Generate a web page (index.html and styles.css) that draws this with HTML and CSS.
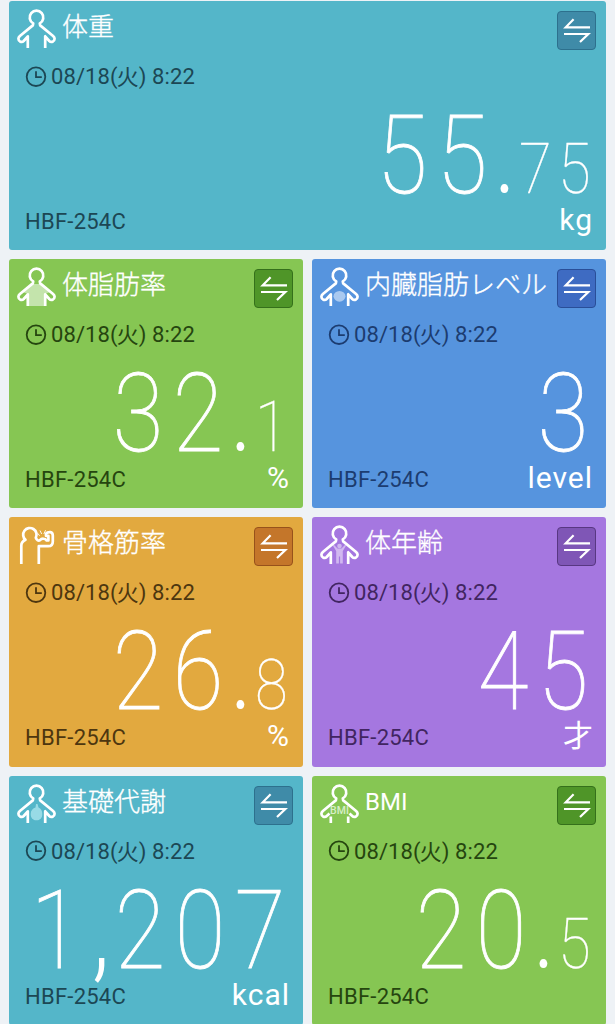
FILE: index.html
```html
<!DOCTYPE html>
<html lang="ja">
<head>
    <meta charset="UTF-8">
    <meta name="viewport" content="width=device-width, initial-scale=1.0">
    <title>HBF-254C</title>
    <link rel="stylesheet" href="styles.css">
</head>
<body>

    <!-- Shared icons -->
    <svg class="sprite">
        <symbol id="person" viewBox="0 0 40 40">
            <path d="M10.8 39V27.3L6.7 32C4.8 34 1.4 32.6 1.4 29.8C1.4 28.7 2 27.8 2.9 27L15.8 16.4L16.2 14.4A6.8 6.8 0 1 1 22.8 14.4L23.2 16.4L36.1 27C37 27.8 37.6 28.7 37.6 29.8C37.6 32.6 34.2 34 32.3 32L28.2 27.3V39"/>
        </symbol>
        <symbol id="muscle" viewBox="0 0 40 40">
            <path d="M4.3 39V20.5C4.3 17.5 6 16 8.5 14.8A6.7 6.7 0 1 1 18.8 12.8C19.8 15.4 21.5 16.3 23 15.2C24.6 13.2 28 13.2 29.6 15.4H31.4V10.8H29V8.6C30 7.4 32 7 33.4 7.1C35.2 7.4 35.8 8.8 35.8 10.6V16.5C35.8 20 34 21.2 31.3 21.2H21.8V39"/>
            <path class="fine" d="M23 5.5L24.7 9M28.6 5.2L26.8 9M20.6 8.2L22.6 10.8"/>
        </symbol>
        <symbol id="clock" viewBox="0 0 22 22">
            <path d="M11 1.4A9.3 9.3 0 1 1 11 20A9.3 9.3 0 1 1 11 1.4M11 5.2V11.2H16.8"/>
        </symbol>
        <symbol id="swap" viewBox="0 0 39 39">
            <path d="M16.6 8.3L8.7 16.3H33M7 23H31.3L23 31"/>
        </symbol>
    </svg>

    <main class="board">

        <!-- Weight -->
        <section class="card wide teal">
            <header class="head">
                <svg class="icon"><use href="#person"/></svg>
                <h2 class="title">体重</h2>
                <button class="swap"><svg><use href="#swap"/></svg></button>
            </header>
            <p class="time"><svg class="clock"><use href="#clock"/></svg>08/18(<span class="day">火</span>) 8:22</p>
            <div class="value"><b>5</b><b>5</b><i>.</i><small>7</small><small>5</small></div>
            <footer class="foot"><span class="model">HBF-254C</span><span class="unit">kg</span></footer>
        </section>

        <!-- Body fat -->
        <section class="card green">
            <header class="head">
                <svg class="icon" viewBox="0 0 40 40">
                    <path class="tint" d="M15.5 17H23.5L33 25L28.2 27V39H10.8V27L6 25Z"/>
                    <use href="#person"/>
                </svg>
                <h2 class="title">体脂肪率</h2>
                <button class="swap"><svg><use href="#swap"/></svg></button>
            </header>
            <p class="time"><svg class="clock"><use href="#clock"/></svg>08/18(<span class="day">火</span>) 8:22</p>
            <div class="value"><b>3</b><b>2</b><i>.</i><small>1</small></div>
            <footer class="foot"><span class="model">HBF-254C</span><span class="unit">%</span></footer>
        </section>

        <!-- Visceral fat -->
        <section class="card blue">
            <header class="head">
                <svg class="icon" viewBox="0 0 40 40">
                    <ellipse class="tint" cx="19.5" cy="29.3" rx="6" ry="5.4"/>
                    <use href="#person"/>
                </svg>
                <h2 class="title">内臓脂肪レベル</h2>
                <button class="swap"><svg><use href="#swap"/></svg></button>
            </header>
            <p class="time"><svg class="clock"><use href="#clock"/></svg>08/18(<span class="day">火</span>) 8:22</p>
            <div class="value"><b>3</b></div>
            <footer class="foot"><span class="model">HBF-254C</span><span class="unit">level</span></footer>
        </section>

        <!-- Skeletal muscle -->
        <section class="card orange">
            <header class="head">
                <svg class="icon"><use href="#muscle"/></svg>
                <h2 class="title">骨格筋率</h2>
                <button class="swap"><svg><use href="#swap"/></svg></button>
            </header>
            <p class="time"><svg class="clock"><use href="#clock"/></svg>08/18(<span class="day">火</span>) 8:22</p>
            <div class="value"><b>2</b><b>6</b><i>.</i><small>8</small></div>
            <footer class="foot"><span class="model">HBF-254C</span><span class="unit">%</span></footer>
        </section>

        <!-- Body age -->
        <section class="card purple">
            <header class="head">
                <svg class="icon" viewBox="0 0 40 40">
                    <circle class="tint" cx="19.5" cy="21" r="2.3"/>
                    <path class="tint" d="M13.6 19.5L17.5 23.5H21.5L25.4 19.5L26 20.8L22.8 26V38.5H20.1V31.5H18.9V38.5H16.2V26L13 20.8Z"/>
                    <use href="#person"/>
                </svg>
                <h2 class="title">体年齢</h2>
                <button class="swap"><svg><use href="#swap"/></svg></button>
            </header>
            <p class="time"><svg class="clock"><use href="#clock"/></svg>08/18(<span class="day">火</span>) 8:22</p>
            <div class="value"><b>4</b><b>5</b></div>
            <footer class="foot"><span class="model">HBF-254C</span><span class="unit kanji">才</span></footer>
        </section>

        <!-- Basal metabolism -->
        <section class="card teal">
            <header class="head">
                <svg class="icon" viewBox="0 0 40 40">
                    <path class="tint" d="M19 20H20.5L21.5 23.5C24 24.5 25.3 27 25.3 30C25.3 34 23 36.3 19.5 36.3C16 36.3 13.7 34 13.7 30C13.7 26.5 16 24.3 18.5 23.5Z"/>
                    <use href="#person"/>
                </svg>
                <h2 class="title">基礎代謝</h2>
                <button class="swap"><svg><use href="#swap"/></svg></button>
            </header>
            <p class="time"><svg class="clock"><use href="#clock"/></svg>08/18(<span class="day">火</span>) 8:22</p>
            <div class="value"><b>1</b><i class="comma">,</i><b>2</b><b>0</b><b>7</b></div>
            <footer class="foot"><span class="model">HBF-254C</span><span class="unit">kcal</span></footer>
        </section>

        <!-- BMI -->
        <section class="card green">
            <header class="head">
                <svg class="icon" viewBox="0 0 40 40">
                    <path d="M10.8 39V32.5M28.2 39V32.5M9.5 29.5L6.7 32C4.8 34 1.4 32.6 1.4 29.8C1.4 28.7 2 27.8 2.9 27L15.8 16.4L16.2 14.4A6.8 6.8 0 1 1 22.8 14.4L23.2 16.4L36.1 27C37 27.8 37.6 28.7 37.6 29.8C37.6 32.6 34.2 34 32.3 32L29.5 29.5"/>
                    <text class="tag" x="19.5" y="29.7">BMI</text>
                </svg>
                <h2 class="title latin">BMI</h2>
                <button class="swap"><svg><use href="#swap"/></svg></button>
            </header>
            <p class="time"><svg class="clock"><use href="#clock"/></svg>08/18(<span class="day">火</span>) 8:22</p>
            <div class="value"><b>2</b><b>0</b><i>.</i><small>5</small></div>
            <footer class="foot"><span class="model">HBF-254C</span></footer>
        </section>

    </main>

</body>
</html>
```
FILE: styles.css
```css
* { box-sizing: border-box; }
html { height: 100%; overflow: hidden; }
body { margin: 0; height: 100%; overflow: hidden; background: #eef2f6; font-family: Roboto, "Noto Sans CJK JP", sans-serif; }
.sprite { display: none; }

.board { display: grid; grid-template-columns: 294px 294px; grid-auto-rows: 249.3px; gap: 8.9px 9px; padding: 1px 9px 0; }
.card { display: flex; flex-direction: column; border-radius: 3px; background: var(--bg); color: var(--ink); overflow: hidden; }
.wide { grid-column: span 2; }

.teal { --bg: #54b6c9; --ink: #1c4754; --btn: #3f8ba8; --edge: #2d708d; --tint: #98dbe6; }
.green { --bg: #86c653; --ink: #25450f; --btn: #4f9528; --edge: #35701b; --tint: #c4e4ac; }
.blue { --bg: #5694de; --ink: #1c3c70; --btn: #3e6bc2; --edge: #294e98; --tint: #a9c9f0; }
.orange { --bg: #e2a93f; --ink: #4d360f; --btn: #c4762a; --edge: #97521b; --tint: #f2d7a4; }
.purple { --bg: #a577e0; --ink: #412561; --btn: #7f56b6; --edge: #583782; --tint: #d1b8f0; }

.head { display: flex; align-items: flex-start; height: 56px; padding: 8px 10px 0 8px; }
.icon { width: 40px; height: 40px; flex: none; fill: none; stroke: #fff; stroke-width: 2.7; stroke-linejoin: round; }
.icon .tint { fill: var(--tint); stroke: none; }
.fine { stroke-width: .9; }
.icon .tag { fill: #d8eec8; stroke: none; font-size: 10.5px; font-weight: 500; text-anchor: middle; }
.title { flex: 1; margin: -1px 0 0 5px; color: #fff; font: 300 26px/34px "Noto Sans CJK JP", sans-serif; white-space: nowrap; -webkit-text-stroke: .35px #fff; }
.latin { padding-top: 2px; font: 400 24px/34px Roboto, sans-serif; -webkit-text-stroke: 0; }
.swap { width: 39px; height: 39px; flex: none; margin-top: 2px; padding: 0; border: 1.5px solid var(--edge); border-radius: 4px; background: var(--btn); }
.swap svg { display: block; width: 39px; height: 39px; margin: -1px; fill: none; stroke: #fff; stroke-width: 2.2; }

.time { display: flex; align-items: center; height: 40px; margin: 0; padding-left: 16px; font-size: 22px; line-height: 24px; letter-spacing: .1px; white-space: pre; }
.clock { width: 22px; height: 22px; margin: -1px 4px 0 0; fill: none; stroke: var(--ink); stroke-width: 1.8; }
.day { margin: -4px 0 0 -1px; font: 400 22px/22px "Noto Sans CJK JP", sans-serif; }

/* every digit sits in its own fixed cell */
.value { display: flex; justify-content: flex-end; align-items: baseline; height: 112px; padding: 3px 13px 0 0; color: #fff; font-size: 110px; line-height: 112px; font-weight: 100; -webkit-text-stroke: .9px #fff; }
.value b, .value i, .value small { display: block; width: 60px; font-weight: 100; font-style: normal; text-align: center; transform: scaleX(.84); }
.value i { width: 24px; font-weight: 300; -webkit-text-stroke: 0; }
.value .comma { padding-left: 5px; font-weight: 300; }
.value small { width: 38.5px; font-size: 71px; -webkit-text-stroke: .3px #fff; }

.foot { display: flex; align-items: flex-start; justify-content: space-between; height: 41px; padding: 0 13px 0 16px; }
.model { font-size: 22px; line-height: 26px; letter-spacing: .25px; }
.unit { color: #fff; font-size: 30px; line-height: 22px; letter-spacing: 1px; }
.kanji { margin-top: -3px; font-family: "Noto Sans CJK JP", sans-serif; font-weight: 400; letter-spacing: 0; }
```
